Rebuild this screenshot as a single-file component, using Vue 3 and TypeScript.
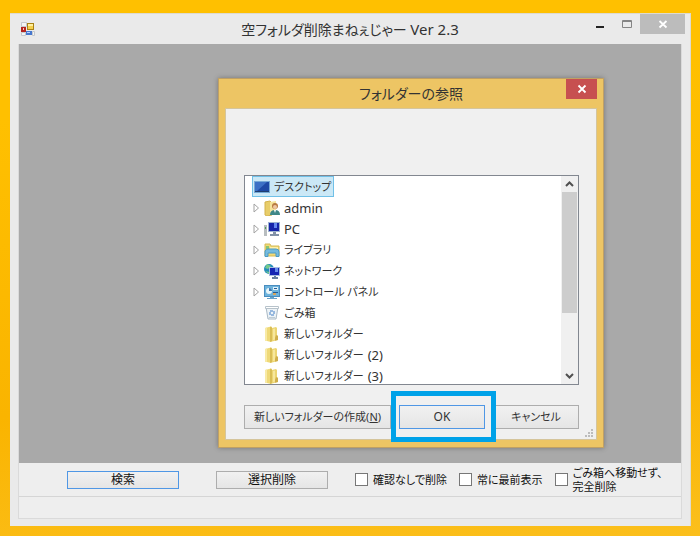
<script setup lang="ts">
interface TreeNode {
  label: string
  icon: string
  expandable?: boolean
  latin?: boolean
  suffix?: string
}

const nodes: TreeNode[] = [
  { label: 'デスクトップ', icon: 'desktop' },
  { label: 'admin', icon: 'user', expandable: true, latin: true },
  { label: 'PC', icon: 'pc', expandable: true, latin: true },
  { label: 'ライブラリ', icon: 'library', expandable: true },
  { label: 'ネットワーク', icon: 'network', expandable: true },
  { label: 'コントロール パネル', icon: 'control', expandable: true },
  { label: 'ごみ箱', icon: 'bin' },
  { label: '新しいフォルダー', icon: 'folder' },
  { label: '新しいフォルダー', icon: 'folder', suffix: '(2)' },
  { label: '新しいフォルダー', icon: 'folder', suffix: '(3)' },
]
</script>

<template>
  <div class="desktop">
    <main class="window">
      <header class="titlebar">
        <svg class="app-icon" viewBox="0 0 14 14" aria-hidden="true">
          <path d="M.5.5h5v4h-5zM.5 10.500h4v3h-4zM11.500 9.500h2v4h-2z" fill="#f4f4f4" stroke="#c4c8cc" />
          <rect x="6.500" y="1.500" width="6" height="6" fill="#f5d14e" stroke="#a98214" />
          <path d="M7 2h5v2H7z" fill="#fff0a0" />
          <rect x="0" y="5" width="5" height="5" fill="#b5231e" />
          <rect x="2" y="6" width="1" height="2" fill="#ffc4b4" />
          <rect x="5" y="9" width="6" height="4" fill="#4677ce" />
          <rect x="6" y="10" width="3" height="1" fill="#b5d0ff" />
        </svg>
        <h1 class="title">空フォルダ削除まねぇじゃー <span class="version">Ver 2.3</span></h1>
        <div class="controls">
          <button class="control" type="button" aria-label="最小化">
            <svg viewBox="0 0 12 12"><path d="M2 9h8" stroke="#222" stroke-width="2" /></svg>
          </button>
          <button class="control" type="button" aria-label="最大化">
            <svg viewBox="0 0 12 12"><path d="M1.500 2.500h9v7h-9zM2 3.500h8" fill="none" stroke="#858585" /></svg>
          </button>
          <button class="control close" type="button" aria-label="閉じる">
            <svg viewBox="0 0 12 12"><path d="M2.500 3l7 6.500m0-6.500l-7 6.500" stroke="#fff" stroke-width="1.800" /></svg>
          </button>
        </div>
      </header>

      <div class="client">
        <section class="workspace"></section>
        <form class="actions" @submit.prevent>
          <button class="button small primary" type="button">検索</button>
          <button class="button small" type="button">選択削除</button>
          <div class="options">
            <label class="option"><input type="checkbox" />確認なしで削除</label>
            <label class="option"><input type="checkbox" />常に最前表示</label>
            <label class="option"><input type="checkbox" /><span>ごみ箱へ移動せず、<br />完全削除</span></label>
          </div>
        </form>
        <footer class="status"></footer>
      </div>
    </main>

    <section class="dialog" role="dialog" aria-labelledby="dialog-title">
      <header class="dialog-bar">
        <h2 id="dialog-title" class="title">フォルダーの参照</h2>
        <button class="dialog-close" type="button" aria-label="閉じる">
          <svg viewBox="0 0 12 12"><path d="M2.500 2.500l7 7m0-7l-7 7" stroke="#fff" stroke-width="1.800" /></svg>
        </button>
      </header>
      <div class="dialog-body">
        <div class="tree">
          <ul class="nodes">
            <li v-for="(node, index) in nodes" :key="index" class="node">
              <span v-if="index > 0" class="arrow">
                <svg v-if="node.expandable" viewBox="0 0 8 10"><path d="M2 1v8l4.500-4z" fill="#fff" stroke="#a2a2a2" /></svg>
              </span>
              <span class="item" :class="{ selected: index === 0 }">
                <svg class="icon" viewBox="0 0 16 16" aria-hidden="true">
                  <template v-if="node.icon === 'desktop'">
                    <path d="M0 2h16v12H0z" fill="#75a9d6" />
                    <path d="M1 3h14v9H1z" fill="#1d49a5" />
                    <path d="M1 3h12L3 12H1z" fill="#3b70c5" />
                    <path d="M1 12h14v1H1z" fill="#203e70" />
                  </template>
                  <template v-else-if="node.icon === 'user'">
                    <path d="M1 2l5-1 2 2v12l-5 1-2-1z" fill="#e8cd69" stroke="#d3b24d" />
                    <path d="M6 2l6-1v14H6z" fill="#f5e49b" />
                    <circle cx="11" cy="6" r="3" fill="#b87b43" />
                    <circle cx="11" cy="7" r="2" fill="#efc6a0" />
                    <path d="M6 15q0-5 5-5t5 5z" fill="#3f8788" />
                    <path d="M10 10h2l-1 3z" fill="#fff" />
                  </template>
                  <template v-else-if="node.icon === 'pc'">
                    <path d="M0 4h3v11H0z" fill="#b8bdc0" />
                    <path d="M1 6h1v2H1z" fill="#549e56" />
                    <path d="M4 1h12v10H4z" fill="#9eb3d0" />
                    <path d="M5 2h10v8H5z" fill="#1624a9" />
                    <path d="M10 2h3v5h-3z" fill="#6488ee" />
                    <path d="M9 11h3v2h3v2H6v-2h3z" fill="#8292a7" />
                  </template>
                  <template v-else-if="node.icon === 'library'">
                    <path d="M1 2h5l1 2h8v10H1z" fill="#f2da77" stroke="#d3b957" />
                    <path d="M2 4h3v3H2z" fill="#8ac56f" />
                    <path d="M6 5h8v3H6z" fill="#fff0a7" />
                    <path d="M1 14.500V9q1-2 3-2h8q3 0 3 3v4.500h-3V11H4v3.500z" fill="#75bbdf" stroke="#4c9bc5" />
                  </template>
                  <template v-else-if="node.icon === 'network'">
                    <circle cx="5" cy="6" r="5" fill="#268dbb" />
                    <path d="M3 1l4 2-3 3-3-1zM1 8l4 1v2z" fill="#75cb8a" />
                    <path d="M5 4h11v9H5z" fill="#a7bde0" />
                    <path d="M6 5h9v7H6z" fill="#1525b3" />
                    <path d="M11 5h3v4h-3z" fill="#668cec" />
                    <path d="M10 13h2v1h2v2H8v-2h2z" fill="#67809f" />
                  </template>
                  <template v-else-if="node.icon === 'control'">
                    <path d="M0 1h16v12H0z" fill="#4a8dbf" />
                    <path d="M1 2h14v10H1z" fill="#6db3dc" />
                    <circle cx="5" cy="7" r="3" fill="#e8f5f9" />
                    <path d="M5 7V4a3 3 0 0 1 3 3z" fill="#3d79b0" />
                    <path d="M9 3h5v3H9z" fill="#dff0f8" />
                    <path d="M10 4h3v1h-3zM9 8h5v1H9z" fill="#225d98" />
                    <path d="M9 9h3v2H9z" fill="#d9a55c" />
                    <path d="M6 13h4v1h3v1H3v-1h3z" fill="#67a2c9" />
                  </template>
                  <template v-else-if="node.icon === 'bin'">
                    <path d="M2 2h12l-2 12H4z" fill="#edf3f7" stroke="#aab9c5" />
                    <path d="M1.500 1.500h13v2h-13z" fill="#fff" stroke="#b7c2ca" />
                    <path d="M6 6h4v4H6z" fill="none" stroke="#427fc6" stroke-dasharray="3 1" />
                    <path d="M5 12h6v1H5z" fill="#bdcbd5" />
                  </template>
                  <template v-else>
                    <path d="M1 2l6-1.500 1 1V15l-1 1-6-1.500z" fill="#efd978" />
                    <path d="M1 2l2-.5v13.500l-2-.5z" fill="#f8eaa6" />
                    <path d="M6 1l1-.5 1 1V15l-1 1-1-.5z" fill="#d9bd55" />
                    <path d="M8 2l4-1 1 1v7l1 1v4l-6 1.500z" fill="#ecd572" />
                    <path d="M9 3l2-.5v11L9 14z" fill="#f7e79c" />
                    <path d="M12 9l2 1v4l-3 .8V12z" fill="#cfae4c" />
                  </template>
                </svg>
                <span :class="{ latin: node.latin }">{{ node.label }}</span>
                <span v-if="node.suffix" class="latin">{{ node.suffix }}</span>
              </span>
            </li>
          </ul>
          <div class="scrollbar">
            <svg viewBox="0 0 15 15"><path d="M4 9l3.500-3.500L11 9" fill="none" stroke="#505050" stroke-width="2" /></svg>
            <div class="track"><div class="thumb"></div></div>
            <svg viewBox="0 0 15 15"><path d="M4 6l3.500 3.500L11 6" fill="none" stroke="#505050" stroke-width="2" /></svg>
          </div>
        </div>
        <div class="dialog-actions">
          <button class="button create" type="button">新しいフォルダーの作成(<u>N</u>)</button>
          <div class="highlight"><button class="button primary confirm" type="button">OK</button></div>
          <button class="button cancel" type="button">キャンセル</button>
        </div>
        <svg class="grip" viewBox="0 0 9 9" aria-hidden="true">
          <path d="M6 0h2v2H6zM3 3h2v2H3zM6 3h2v2H6zM0 6h2v2H0zM3 6h2v2H3zM6 6h2v2H6z" fill="#bcbcbc" />
        </svg>
      </div>
    </section>
  </div>
</template>

<style>
body {
  margin: 0;
}
</style>

<style scoped>
* {
  box-sizing: border-box;
}

.desktop {
  position: relative;
  display: flex;
  min-height: 100vh;
  padding: 13px 9px 10px 10px;
  background: linear-gradient(175deg, #ffc000 20%, #fab400 70%, #fbbf1c);
  color: #333;
  font-family: "Noto Sans", "Noto Sans CJK JP", sans-serif;
  font-size: 12px;
  font-feature-settings: "palt";
}

button,
input {
  margin: 0;
  font: inherit;
  font-feature-settings: inherit;
  color: inherit;
}

.window {
  display: flex;
  flex: 1;
  flex-direction: column;
  min-width: 0;
  padding-bottom: 7px;
  border: 1px solid #dedbd0;
  border-width: 1px 1px 0 0;
  background: #eaeaea;
}

.titlebar {
  position: relative;
  display: flex;
  align-items: center;
  justify-content: space-between;
  height: 30px;
  padding: 0 5px 0 11px;
}

.app-icon {
  width: 14px;
  height: 14px;
}

.title {
  margin: 0;
  font-size: 14px;
  font-weight: 400;
  line-height: 24px;
  white-space: nowrap;
}

.version {
  font-size: 15px;
}

.titlebar .title {
  position: absolute;
  right: 0;
  left: 0;
  text-align: center;
  pointer-events: none;
}

.controls {
  display: flex;
  align-self: flex-start;
}

.control,
.dialog-close {
  display: flex;
  align-items: center;
  justify-content: center;
  width: 27px;
  height: 20px;
  padding: 0;
  border: 0;
  background: transparent;
}

.control.close {
  width: 45px;
  background: #bcbcbc;
}

.control svg,
.dialog-close svg {
  width: 12px;
  height: 12px;
}

.client {
  display: flex;
  flex: 1;
  flex-direction: column;
  margin: 0 8px;
  border: 1px solid #dadada;
  border-top: 0;
  background: #eee;
}

.workspace {
  flex: 1;
  background: #a9a9a9;
}

.actions {
  display: flex;
  align-items: center;
  height: 33px;
  padding: 0 8px 0 48px;
  color: #111;
}

.button {
  height: 24px;
  padding: 0 8px;
  border: 1px solid #adadad;
  background: linear-gradient(#f1f1f1, #e5e5e5);
  line-height: 20px;
  white-space: nowrap;
}

.button.small {
  width: 112px;
  height: 18px;
  margin-right: 37px;
  line-height: 14px;
}

.button.primary {
  border-color: #4f97e5;
}

.options {
  display: flex;
  gap: 12px;
  margin-left: -10px;
}

.option {
  display: flex;
  align-items: center;
  gap: 5px;
  font-size: 11px;
  line-height: 14px;
  white-space: nowrap;
}

.option input {
  width: 13px;
  height: 13px;
  border: 1px solid #777;
  background: #fff;
  appearance: none;
}

.status {
  height: 22px;
  border-top: 1px solid #d5d5d5;
}

.dialog {
  position: absolute;
  top: 78px;
  left: 218px;
  width: 386px;
  padding: 0 6px 7px;
  border: 1px solid #c0a064;
  background: #edc564;
  box-shadow: 0 0 5px rgb(0 0 0 / 30%);
}

.dialog-bar {
  position: relative;
  display: flex;
  align-items: center;
  justify-content: center;
  height: 29px;
}

.dialog-close {
  position: absolute;
  top: 0;
  right: 0;
  width: 31px;
  background: #c75050;
}

.dialog-body {
  position: relative;
  padding: 66px 17px 10px 18px;
  border: 1px solid #d5c59c;
  background: #f0f0f0;
}

.tree {
  display: flex;
  height: 210px;
  border: 1px solid #828790;
  background: #fff;
  font-size: 11px;
}

.nodes {
  flex: 1;
  margin: 0;
  padding: 0 0 0 7px;
  overflow: hidden;
  list-style: none;
}

.node {
  display: flex;
  align-items: center;
  height: 21px;
}

.arrow {
  display: flex;
  width: 10px;
}

.arrow svg {
  width: 8px;
  height: 10px;
}

.item {
  display: flex;
  align-items: center;
  height: 21px;
  gap: 4px;
  padding: 0 2px 0 1px;
  border: 1px solid transparent;
  line-height: 18px;
  white-space: nowrap;
}

.item.selected {
  border-color: #70c0e7;
  background: #cbe8f6;
}

.latin {
  font-size: 13px;
}

.icon {
  width: 16px;
  height: 16px;
}

.scrollbar {
  display: flex;
  flex-direction: column;
  width: 17px;
  padding: 1px;
  background: #f0f0f0;
}

.scrollbar svg {
  width: 15px;
  height: 15px;
}

.track {
  flex: 1;
}

.thumb {
  height: 69%;
  background: #cdcdcd;
}

.dialog-actions {
  display: flex;
  gap: 8px;
  margin-top: 20px;
  font-size: 11px;
}

.create {
  flex: 1;
}

.cancel,
.confirm {
  width: 86px;
}

.confirm {
  font-size: 12px;
}

.highlight {
  position: relative;
  z-index: 1;
  display: flex;
}

.highlight::after {
  position: absolute;
  inset: -14px -11px -13px -8px;
  border: 5px solid #00a2e8;
  content: "";
  pointer-events: none;
}

.grip {
  position: absolute;
  right: 2px;
  bottom: 1px;
  width: 9px;
  height: 9px;
}
</style>
